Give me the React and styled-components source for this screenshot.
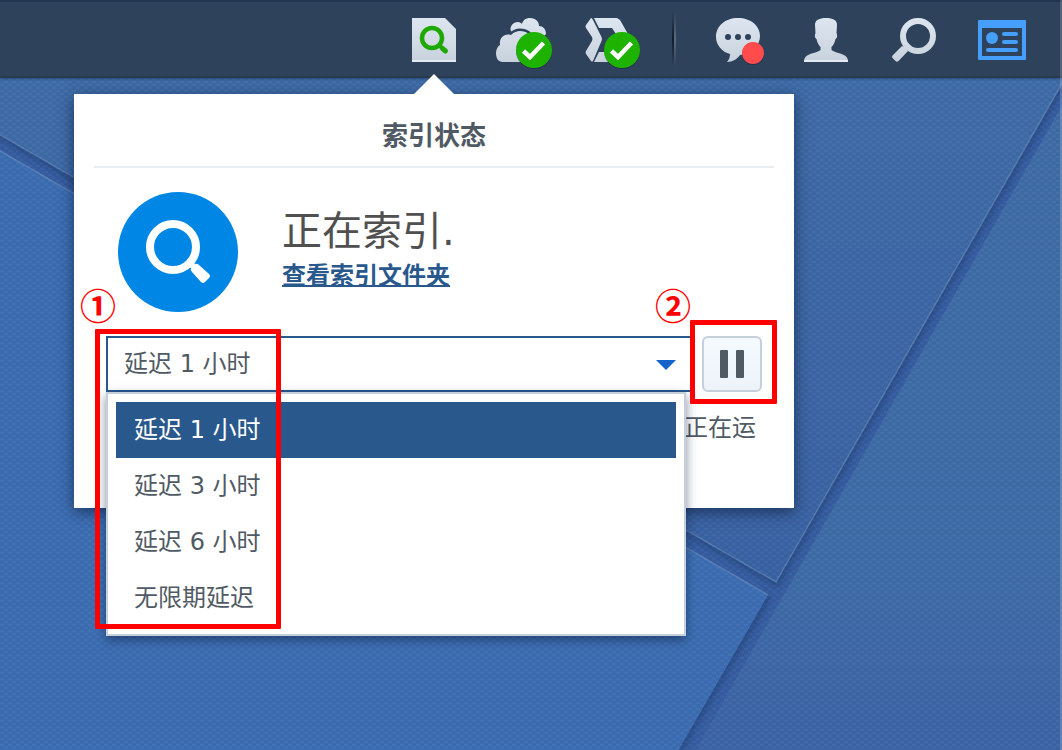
import React, { useState } from "react";
import styled, { createGlobalStyle } from "styled-components";

const theme = {
    bar: "#2e425b",
    barTop: "#20354f",
    barBottom: "#2a3a4e",
    icon: "#d5dfe9",
    green: "#1eb300",
    lens: "#1ea800",
    text: "#505a64",
    heading: "#505050",
    accent: "#29588c",
    round: "#0086e5",
    line: "#c6d0dc",
    mark: "#ff0000",
};

const GlobalStyle = createGlobalStyle`
    * {
        box-sizing: border-box;
    }
    body {
        margin: 0;
        font-family: "DejaVu Sans", "Noto Sans CJK SC", sans-serif;
        font-size: 24px;
        line-height: 36px;
        color: ${theme.text};
    }
`;

const Page = styled.div`
    position: relative;
    min-height: 100vh;
    overflow: hidden;
    background: #3b68a8;

    &::after {
        content: "";
        position: absolute;
        top: 0;
        right: 0;
        bottom: 0;
        width: 2px;
        background: rgba(255, 255, 255, .18);
    }
`;
const WallpaperSvg = styled.svg`
    position: absolute;
    inset: 0;
    width: 100%;
    height: 100%;
`;
const Taskbar = styled.header`
    position: relative;
    display: flex;
    justify-content: flex-end;
    padding-right: 16px;
    background: ${theme.bar};
    border-top: 2px solid ${theme.barTop};
    border-bottom: 2px solid ${theme.barBottom};
    box-shadow: 0 1px 2px rgba(20, 40, 80, .5);
`;
const TrayButton = styled.button`
    width: 88px;
    height: 74px;
    padding: 0;
    border: 0;
    background: none;
    cursor: pointer;

    svg {
        display: block;
    }
`;
const Divider = styled.div`
    display: flex;
    justify-content: center;
    align-items: center;
    width: 40px;

    &::before {
        content: "";
        width: 4px;
        height: 54px;
        background: linear-gradient(90deg, #141c28 50%, #5a6b80 50%);
        mask-image: linear-gradient(transparent, #000 50%, transparent);
    }
`;
const Main = styled.main`
    position: relative;
    display: flex;
    justify-content: flex-end;
    padding: 16px 268px 0 0;
`;
const Panel = styled.section`
    position: relative;
    flex: 0 1 720px;
    padding-bottom: 62px;
    background: #fff;
    box-shadow: 0 4px 14px rgba(10, 25, 55, .65);

    &::before {
        content: "";
        position: absolute;
        top: -20px;
        left: 50%;
        margin-left: -20px;
        border: 20px solid transparent;
        border-top: 0;
        border-bottom-color: #fff;
    }
`;
const PanelTitle = styled.h1`
    margin: 0 20px;
    padding: 24px 0 12px;
    border-bottom: 2px solid #e9eef4;
    font-size: 26px;
    line-height: 36px;
    font-weight: 700;
    text-align: center;
`;
const Summary = styled.div`
    display: flex;
    gap: 44px;
    padding: 24px 44px;
`;
const SummaryText = styled.div`
    padding-top: 12px;
`;
const State = styled.p`
    margin: 0;
    font-size: 40px;
    line-height: 54px;
    color: ${theme.heading};
`;
const FolderLink = styled.a`
    font-weight: 700;
    color: ${theme.accent};
    text-decoration-thickness: 2px;
`;
const Controls = styled.div`
    display: flex;
    gap: 10px;
    padding: 0 32px;
`;
const DelayField = styled.div`
    position: relative;
    z-index: 1;
    flex: 1;
`;
const DelaySelect = styled.select`
    display: block;
    width: 100%;
    height: 56px;
    padding: 0 16px;
    border: 2px solid ${theme.accent};
    border-radius: 0;
    appearance: none;
    background: #fff;
    color: inherit;
    font: inherit;
    outline: none;
`;
const Caret = styled.svg`
    position: absolute;
    top: 24px;
    right: 16px;
    pointer-events: none;
`;
const Menu = styled.ul`
    position: absolute;
    top: 100%;
    left: 0;
    right: 6px;
    margin: 0;
    padding: 8px;
    border: 2px solid ${theme.line};
    background: #fff;
    box-shadow: 0 4px 10px rgba(10, 25, 55, .5);
    list-style: none;
`;
const MenuItem = styled.li`
    padding: 10px 18px;
    background: ${props => props.$active ? theme.accent : "none"};
    color: ${props => props.$active ? "#fff" : "inherit"};
    cursor: pointer;
`;
const PauseWrap = styled.div`
    position: relative;
    z-index: 2;
`;
const PauseButton = styled.button`
    display: flex;
    justify-content: center;
    align-items: center;
    width: 60px;
    height: 56px;
    padding: 0;
    border: 2px solid ${theme.line};
    border-radius: 6px;
    background: linear-gradient(#f5faff, #eef3f9);
    cursor: pointer;
`;
const Status = styled.p`
    margin: 18px 38px 0;
    text-align: right;
`;
const Frame = styled.div`
    position: absolute;
    top: ${props => props.$top}px;
    left: ${props => props.$left}px;
    width: ${props => props.$width}px;
    height: ${props => props.$height}px;
    border: 5px solid ${theme.mark};
    border-radius: 1px;
    pointer-events: none;
`;
const FrameLabel = styled.span`
    position: absolute;
    bottom: 100%;
    right: 100%;
    margin: ${props => props.$inset ? "0 -16px 11px 0" : "0 4px 2px 0"};
    font-family: "Noto Sans CJK SC", sans-serif;
    font-size: 36px;
    line-height: 38px;
    font-weight: 700;
    color: ${theme.mark};
`;

const options = ["延迟 1 小时", "延迟 3 小时", "延迟 6 小时", "无限期延迟"];

const Wallpaper = () => <WallpaperSvg viewBox="0 0 1062 750" preserveAspectRatio="xMidYMid slice" aria-hidden="true">
    <defs>
        <linearGradient id="metal" gradientUnits="userSpaceOnUse" x1="0" y1="18" x2="0" y2="62">
            <stop offset="0" stopColor="#dde6f0" />
            <stop offset="1" stopColor="#c8d2dd" />
        </linearGradient>
        <linearGradient id="upper" x1="0" y1="0" x2="0" y2="1">
            <stop offset="0" stopColor="#3f6ca6" />
            <stop offset="1" stopColor="#3a62a2" />
        </linearGradient>
        <linearGradient id="right" x1="0" y1="0" x2="0" y2="1">
            <stop offset="0" stopColor="#3f6ba5" />
            <stop offset=".7" stopColor="#3e6ba5" />
            <stop offset="1" stopColor="#3c63a5" />
        </linearGradient>
        <pattern id="weave" width="8" height="6" patternUnits="userSpaceOnUse">
            <path d="M0 1h4M4 4h4" stroke="#fff" strokeOpacity=".03" strokeWidth="2" />
            <path d="M4 1h4M0 4h4" stroke="#0c2a60" strokeOpacity=".04" strokeWidth="2" />
        </pattern>
        <filter id="soft" x="-5%" y="-5%" width="110%" height="110%">
            <feGaussianBlur stdDeviation="3" />
        </filter>
    </defs>
    <rect width="1062" height="750" fill="#375da0" />
    <path d="M-10 129 776 582 1072 66" fill="none" stroke="#274a82" strokeWidth="8" filter="url(#soft)" />
    <path d="M768 595 678 750" fill="none" stroke="#274a82" strokeWidth="8" filter="url(#soft)" />
    <path d="M-10 -10H1072V66L776 582-10 129Z" fill="url(#upper)" />
    <path d="M-10 145 768 595 673 760H-10Z" fill="#3c6db2" />
    <path d="M1072 88V760H690Z" fill="url(#right)" />
    <path d="M-10 129 776 582 1072 66M-10 145 768 595" fill="none" stroke="#7698c4" strokeOpacity=".5" strokeWidth="1.5" />
    <rect width="1062" height="750" fill="url(#weave)" />
</WallpaperSvg>;

// Tray icons share one canvas, the size of the button
const Tray = ({ label, children }) => <TrayButton aria-label={label}>
    <svg width="88" height="74" viewBox="0 2 88 74" fill={theme.icon}>{children}</svg>
</TrayButton>;

const Done = () => <g>
    <circle cx="56" cy="51" r="18" fill="#18283a" opacity=".5" />
    <circle cx="56" cy="50" r="18" fill={theme.green} />
    <path d="M45.500 51 52 57 65.500 43" fill="none" stroke="#fff" strokeWidth="4.500" />
</g>;

export default () => {
    const [delay, setDelay] = useState(options[0]);

    return <>
        <GlobalStyle />
        <Page>
            <Wallpaper />
            <Taskbar>
                <Tray label="索引">
                    <path d="M22 18h33l11 11v33H22Z" fill="url(#metal)" />
                    <path d="M22 60h44v2H22Z" fill="#e3eaf1" />
                    <circle cx="42" cy="38" r="10" fill="none" stroke={theme.lens} strokeWidth="4.500" />
                    <path d="m49 45 3 3" stroke={theme.lens} strokeWidth="4" />
                    <path d="m52.500 48.500 3 2.500" stroke={theme.lens} strokeWidth="5" strokeLinecap="round" />
                </Tray>
                <Tray label="云">
                    <path d="M33 31c-2-4 2-9 7-9 2 0 3 1 4 2 1-4 4-6 8-6 6 0 9 4 9 8 4 0 7 3 7 8l-6 6H40Z" fill="url(#metal)" />
                    <path
                        d="M25 62c-5 0-7-4-7-9 0-4 2-7 4-8-1-7 4-12 11-10 3-3 6-4 9-4 7 0 11 4 12 8l6 5v18Z"
                        fill="url(#metal)"
                        stroke={theme.bar}
                        strokeWidth="5"
                        paintOrder="stroke"
                    />
                    <Done />
                </Tray>
                <Tray label="同步">
                    <path d="M25 18q1 0 2 2l8.500 17q1 2 0 4L27 61q-1 1-2 0l-5-7q-1-1 0-3l6-10q1-2 0-4l-6-9q-1-2 0-3Z" fill="url(#metal)" />
                    <path d="M28 18h23l3 2 8 14H50l-4-6H33Z" fill="url(#metal)" />
                    <path d="M33 52h16v10H28Z" fill="url(#metal)" />
                    <Done />
                </Tray>
                <Divider />
                <Tray label="通知">
                    <path d="M44 18c13 0 22 8 22 18S57 54 46 55c-3 4-7 7-13 7 2-2 3-5 3-8-8-2-14-9-14-17 0-11 9-19 22-19Z" fill="url(#metal)" />
                    <g fill={theme.bar}>
                        <circle cx="34" cy="37" r="3" />
                        <circle cx="44" cy="37" r="3" />
                        <circle cx="54" cy="37" r="3" />
                    </g>
                    <circle cx="59" cy="54" r="11" fill="#18283a" opacity=".5" />
                    <circle cx="59" cy="53" r="11" fill="#ff4b4b" />
                </Tray>
                <Tray label="用户">
                    <path d="M44 18c7 0 11 2 11 7l-.500 8c1 2 1 5-1 6-1 4-2 6-4 8v3c4 3 10 3 14 6 2 2 2.500 3 2.500 6H22c0-3 .5-4 2.500-6 4-3 10-3 14-6v-3c-2-2-3-4-4-8-2-1-2-4-1-6l-.500-8c0-5 4-7 11-7Z" fill="url(#metal)" />
                    <path d="M22 60h44v2H22Z" fill="#e3eaf1" />
                </Tray>
                <Tray label="搜索">
                    <circle cx="48" cy="36" r="15" fill="none" stroke="url(#metal)" strokeWidth="6" />
                    <path d="m35 46 3 3-1 1 1 1-9.500 10q-1.500 1.500-3 0L22.500 58q-1-1.500 0-2.500L32 46l2 1Z" fill="url(#metal)" />
                    <path d="m38 43 3 3-4 5-4-4Z" fill="url(#metal)" />
                </Tray>
                <Tray label="小组件">
                    <path d="M21 20h46q1 0 1 1v38q0 1-1 1H21q-1 0-1-1V21q0-1 1-1Zm3 8v28h40V28Z" fill="#469ffb" fillRule="evenodd" />
                    <circle cx="34" cy="38" r="6" fill="#469ffb" />
                    <path d="M46 34h12M46 42h12M30 50h28" stroke="#469ffb" strokeWidth="4" strokeLinecap="round" />
                </Tray>
            </Taskbar>
            <Main>
                <Panel>
                    <PanelTitle>索引状态</PanelTitle>
                    <Summary>
                        <svg width="120" height="120" viewBox="0 0 120 120" aria-hidden="true">
                            <circle cx="60" cy="60" r="60" fill={theme.round} />
                            <circle cx="55" cy="55" r="23" fill="none" stroke="#fff" strokeWidth="8" />
                            <path d="m69 74 5-5 3 3q2-1 4 1l10 9q2 2 0 4l-4 4q-2 2-4 0l-9-10q-2-2-1-4Z" fill="#fff" />
                        </svg>
                        <SummaryText>
                            <State>正在索引.</State>
                            <FolderLink href="#folders">查看索引文件夹</FolderLink>
                        </SummaryText>
                    </Summary>
                    <Controls>
                        <DelayField>
                            <DelaySelect aria-label="延迟" value={delay} onChange={e => setDelay(e.target.value)}>
                                {options.map(i => <option key={i}>{i}</option>)}
                            </DelaySelect>
                            <Caret width="20" height="10" viewBox="0 0 20 10">
                                <path d="M0 0h20L10 10Z" fill="#1363cb" />
                            </Caret>
                            <Menu role="listbox" aria-label="延迟">
                                {options.map(i => <MenuItem
                                    key={i}
                                    role="option"
                                    aria-selected={i === delay}
                                    $active={i === delay}
                                    onClick={() => setDelay(i)}
                                >{i}</MenuItem>)}
                            </Menu>
                            <Frame $top={-7} $left={-11} $width={186} $height={300}>
                                <FrameLabel $inset>①</FrameLabel>
                            </Frame>
                        </DelayField>
                        <PauseWrap>
                            <PauseButton aria-label="暂停">
                                <svg width="24" height="28" viewBox="0 0 24 28" fill={theme.text}>
                                    <rect width="8" height="28" rx="1" />
                                    <rect x="16" width="8" height="28" rx="1" />
                                </svg>
                            </PauseButton>
                            <Frame $top={-16} $left={-12} $width={87} $height={84}>
                                <FrameLabel>②</FrameLabel>
                            </Frame>
                        </PauseWrap>
                    </Controls>
                    <Status>正在运</Status>
                </Panel>
            </Main>
        </Page>
    </>;
};
